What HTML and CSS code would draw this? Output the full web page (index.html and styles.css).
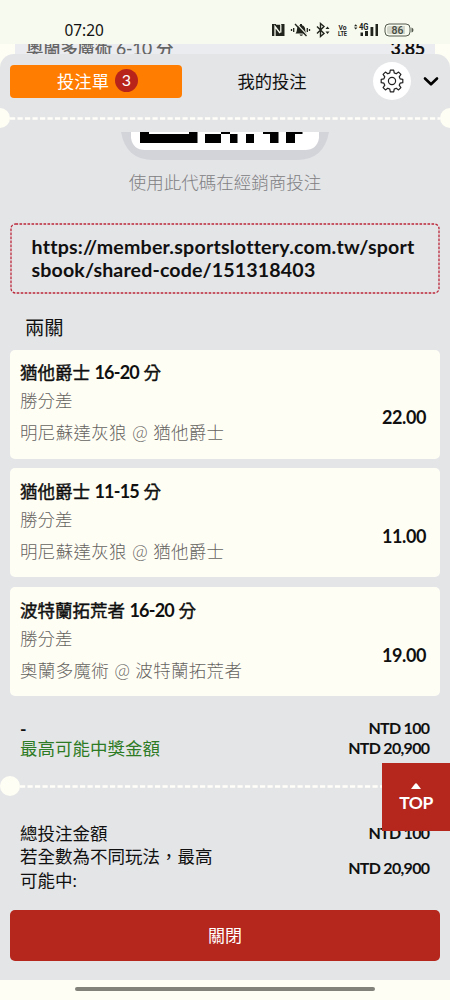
FILE: index.html
```
<!DOCTYPE html>
<html lang="zh-Hant">
<head>
<meta charset="utf-8">
<meta name="viewport" content="width=device-width, initial-scale=1">
<title>投注單</title>
<link rel="stylesheet" href="styles.css">
</head>
<body>
<div class="phone">
  <header class="status">
    <span class="clock">07:20</span>
    <svg class="status-icons" width="146" height="18" viewBox="0 0 146 18">
      <path fill="#20241c" d="M1 2h12.500v12H1z"/>
      <path fill="none" stroke="#f7faee" stroke-width="1.300" d="M4 14V4.500l5 6.500M5 2l5 0M9.800 2.500V10.500"/>
      <path fill="#20241c" d="M24.500 11.500c1.500-1.500 1.200-3.500 1.700-5.500.5-1.700 1.600-2.500 2.800-2.700V2h2v1.300c2 .4 3 2 3.200 4 .1 2 .3 3 1.600 4.200zM28.500 12.500h3.500c-.5 1.700-3 1.700-3.500 0z"/>
      <path stroke="#f7faee" stroke-width="1.200" d="M25.500 1.500l11 12"/>
      <path stroke="#20241c" stroke-width="1.400" d="M24 2l11.500 12"/>
      <path stroke="#20241c" stroke-width="1.300" d="M20.500 7v2M22.700 6v4M36.300 6v4M38.500 7v2"/>
      <path fill="none" stroke="#20241c" stroke-width="1.400" d="M46 4.500l7 7-3.500 3V1.500l3.500 3-7 7"/>
      <path fill="#20241c" d="M54.500 7l2-2.500 2 2.500zM54.500 9.500h4l-2 2.500z"/>
      <text class="tiny" x="67.500" y="7.500" textLength="8" lengthAdjust="spacingAndGlyphs">Vo</text>
      <text class="tiny" x="67" y="14" textLength="9" lengthAdjust="spacingAndGlyphs">LTE</text>
      <path fill="#20241c" d="M83 4.200l1.700-2 1.700 2zM83 5.500h3.400l-1.700 2z"/>
      <text class="tiny net" x="88" y="7.800" textLength="9.500" lengthAdjust="spacingAndGlyphs">4G</text>
      <path fill="#20241c" d="M89.500 10.500h2.500v3.500h-2.500zM94 9h3v5h-3zM99.500 5h2.800v9h-2.800zM104.500 2h2.500v12h-2.500z"/>
      <rect x="114" y="2" width="25" height="12" rx="4" fill="#f7faee" stroke="#555b4e"/>
      <path fill="#d3d7cb" d="M118 4h16v8h-16q-2 0-2-2V6q0-2 2-2z"/>
      <path fill="#555b4e" d="M140.500 5.500q2 .5 2 2.500t-2 2.500z"/>
      <text class="charge" x="120.500" y="11.800" textLength="12">86</text>
    </svg>
  </header>

  <div class="peek"><span class="peek-name">奧蘭多魔術 6-10 分</span><span class="peek-odds">3.85</span></div>

  <main class="sheet">
    <nav class="tabs">
      <div class="tab active">投注單<span class="count">3</span></div>
      <div class="tab">我的投注</div>
      <div class="gear">
        <svg width="24" height="24" viewBox="0 0 24 24" fill="none" stroke="#222" stroke-width="1.200" stroke-linejoin="round">
          <path d="M10.300 1.200h3.400l.5 2.700 2 .9 2.400-1.700 2.300 2.300-1.700 2.400.9 2 2.700.5v3.400l-2.700.5-.9 2 1.700 2.400-2.300 2.300-2.400-1.700-2 .9-.5 2.700h-3.400l-.5-2.700-2-.9-2.400 1.700-2.300-2.300 1.700-2.400-.9-2-2.700-.5v-3.400l2.700-.5.9-2-1.700-2.400 2.300-2.300 2.400 1.700 2-.9z"/>
          <circle cx="12" cy="12" r="3.600"/>
        </svg>
      </div>
      <svg class="chevron" width="16" height="12" viewBox="0 0 16 12" fill="none" stroke="#000" stroke-width="2.600" stroke-linecap="round" stroke-linejoin="round"><path d="M2 3.500L8 9.300 14 3.500"/></svg>
    </nav>
    <div class="divider wide"><i></i><svg class="dashes" height="3"><line x1="0" y1="1.500" x2="450" y2="1.500"/></svg><i></i></div>

    <section class="share">
      <svg class="qr" width="208" height="28" viewBox="0 0 208 28">
        <path fill="#d3d4da" d="M0 0h208q-5 28-32 28H32Q5 28 0 0z"/>
        <path fill="#fff" d="M10 0h188v6q-2 12-14 12H24Q12 18 10 6z"/>
        <path d="M19 0h9v2h40V0h8.500v11H19zM84 2h16V0h9v2h7.500v9H109V2h-9v9H84zM125 2h8v9h-8zM142 0h15.500v11H149V2h-7zM165 0h16.500v2H174v9h-9z"/>
      </svg>
      <p class="hint">使用此代碼在經銷商投注</p>
      <div class="link">
        <svg class="frame" width="430" height="71"><rect x="1" y="1" width="428" height="69" rx="4.500"/></svg>
        <p class="url-a">https://member.sportslottery.com.tw/sport</p>
        <p class="url-b">sbook/shared-code/151318403</p>
      </div>
    </section>

    <h2 class="combo">兩關</h2>
    <section class="bets">
      <article class="bet">
        <div><h3>猶他爵士 <b>16-20</b> 分</h3><p class="market">勝分差</p><p class="match">明尼蘇達灰狼 <span>@</span> 猶他爵士</p></div>
        <b class="odds">22.00</b>
      </article>
      <article class="bet">
        <div><h3>猶他爵士 <b>11-15</b> 分</h3><p class="market">勝分差</p><p class="match">明尼蘇達灰狼 <span>@</span> 猶他爵士</p></div>
        <b class="odds">11.00</b>
      </article>
      <article class="bet">
        <div><h3>波特蘭拓荒者 <b>16-20</b> 分</h3><p class="market">勝分差</p><p class="match">奧蘭多魔術 <span>@</span> 波特蘭拓荒者</p></div>
        <b class="odds">19.00</b>
      </article>
    </section>

    <section class="payout">
      <div class="row"><span class="dash">-</span><b>NTD 100</b></div>
      <div class="row"><span class="win">最高可能中獎金額</span><b>NTD 20,900</b></div>
    </section>
    <div class="divider"><i></i><svg class="dashes" height="3"><line x1="0" y1="1.500" x2="450" y2="1.500"/></svg></div>
    <section class="totals">
      <div class="row"><span>總投注金額</span><b>NTD 100</b></div>
      <div class="row"><span>若全數為不同玩法，最高<br>可能中:</span><b>NTD 20,900</b></div>
    </section>
    <button class="close">關閉</button>
  </main>

  <footer class="gesture"><div class="pill"></div></footer>
  <div class="top"><svg width="10" height="6" viewBox="0 0 10 6"><path fill="#fff" d="M0 6l3.800-5q1.200-1.400 2.400 0L10 6z"/></svg><span>TOP</span></div>
</div>
</body>
</html>
```

FILE: styles.css
```
* { box-sizing: border-box; }
body {
  margin: 0;
  font-family: Lato, "Noto Sans CJK TC", sans-serif;
  font-size: 17.5px;
  color: #101010;
  white-space: nowrap;
}
h2, h3, p { margin: 0; font-weight: 400; }
.phone {
  position: relative;
  display: flex;
  flex-direction: column;
  width: 450px;
  height: 1000px;
  overflow: hidden;
  background: #fffef5;
}
.status {
  display: flex;
  justify-content: space-between;
  height: 44px;
  padding: 22px 33px 0 64.500px;
  background: #f7faee;
}
.clock { font-family: "Noto Sans", sans-serif; font-size: 15.4px; line-height: 18px; color: #111; }
.tiny { font: 700 7px Roboto, sans-serif; fill: #20241c; }
.tiny.net { font-size: 8.5px; }
.charge { font: 500 10.500px Roboto, sans-serif; fill: #444a3e; }
.peek {
  display: flex;
  justify-content: space-between;
  height: 22px;
  margin: 0 15px;
  padding: 0 10px 0 11px;
  overflow: hidden;
  background: #ebecef;
  color: #666;
  font-weight: 500;
  letter-spacing: -0.3px;
  line-height: 9px;
}
.peek-odds { font-size: 18px; font-weight: 700; color: #111; }
.sheet {
  position: relative;
  height: 926px;
  margin-top: -12px;
  background: #e4e5e7;
  border-radius: 14px 14px 0 0;
}
.tabs {
  display: flex;
  align-items: center;
  height: 54px;
  padding: 0 11px 0 10px;
}
.tab {
  display: flex;
  justify-content: center;
  align-items: center;
  gap: 6px;
  width: 180px;
  height: 33px;
  padding-bottom: 1px;
  font-size: 17.3px;
}
.tab.active { width: 172px; padding-left: 3px; border-radius: 4px; background: #ff7d00; color: #fff; }
.count {
  width: 23px;
  height: 23px;
  border-radius: 50%;
  background: #b8231a;
  font-size: 16px;
  line-height: 22px;
  text-align: center;
}
.gear {
  display: flex;
  justify-content: center;
  align-items: center;
  width: 38px;
  height: 38px;
  margin-left: 11px;
  border-radius: 50%;
  background: #fff;
}
.chevron { margin-left: 12px; }
.divider { display: flex; align-items: center; height: 20px; }
.divider i { flex: none; width: 20px; height: 20px; border-radius: 50%; background: #fffef5; }
.dashes { flex: 1; min-width: 0; }
.dashes line { stroke: #fffef9; stroke-width: 2.500; stroke-dasharray: 5.200 2.300; }
.divider.wide { margin: 0 -10px; }
.share { padding: 4px 10px 0; }
.qr { display: block; margin-left: 111px; }
.hint { height: 63px; line-height: 45px; text-align: center; color: #808083; font-weight: 300; }
.link {
  position: relative;
  height: 71px;
  padding: 11.500px 21.500px 0;
  font-size: 19.6px;
  line-height: 23.500px;
}
.url-a, .url-b { font-weight: 700; font-variant-ligatures: none; }
.url-a { letter-spacing: 0.220px; }
.url-b { letter-spacing: 0.140px; }
.frame { position: absolute; left: 0; top: 0; }
.frame rect { fill: none; stroke: #bb2639; stroke-width: 1.300; stroke-dasharray: 2.600 1.400; }
.combo { height: 55.500px; padding: 19px 25px 0; font-size: 19.3px; line-height: 29px; }
.bets { display: flex; flex-direction: column; gap: 9.500px; padding: 0 10px; }
.bet {
  display: flex;
  justify-content: space-between;
  height: 109.200px;
  padding: 8.800px 14px 0 10px;
  border-radius: 5px;
  background: #fffef5;
}
.bet h3 { font-size: 17.5px; line-height: 29px; -webkit-text-stroke: 0.450px #101010; }
.bet h3 b { font-size: 18px; letter-spacing: -0.8px; -webkit-text-stroke: 0; }
.market, .match { color: #65635f; font-weight: 300; line-height: 28px; }
.match { line-height: 35px; letter-spacing: 0.320px; }
.match span { font-size: 19px; line-height: 20px; }
.odds { padding-top: 48px; font-size: 18px; font-weight: 700; line-height: 22px; letter-spacing: -0.4px; }
.row { display: flex; justify-content: space-between; align-items: center; }
.row b { font-size: 16px; font-weight: 700; letter-spacing: -0.7px; margin: -2px 0.700px 0 0; }
.payout { height: 80px; padding: 23px 20px 0; line-height: 20px; }
.dash { font-weight: 700; }
.win { color: #2d7b24; }
.totals { height: 114px; padding: 26px 20px 0; line-height: 23.300px; }
.close {
  display: block;
  width: 430px;
  height: 51px;
  margin: 0 10px;
  padding: 0 0 2px;
  border: 0;
  border-radius: 5px;
  background: #b5261c;
  color: #fff;
  font: 400 17px Lato, "Noto Sans CJK TC", sans-serif;
}
.gesture { display: flex; justify-content: center; height: 20px; padding-top: 7px; }
.pill { width: 300px; height: 4px; border-radius: 2px; background: #82817a; }
.top {
  position: absolute;
  right: 0;
  top: 763px;
  display: flex;
  flex-direction: column;
  align-items: center;
  width: 68px;
  height: 68px;
  padding-top: 20px;
  background: #b5261c;
  color: #fff;
  font-size: 17.5px;
  font-weight: 700;
  letter-spacing: -0.5px;
  line-height: 28px;
}
```
